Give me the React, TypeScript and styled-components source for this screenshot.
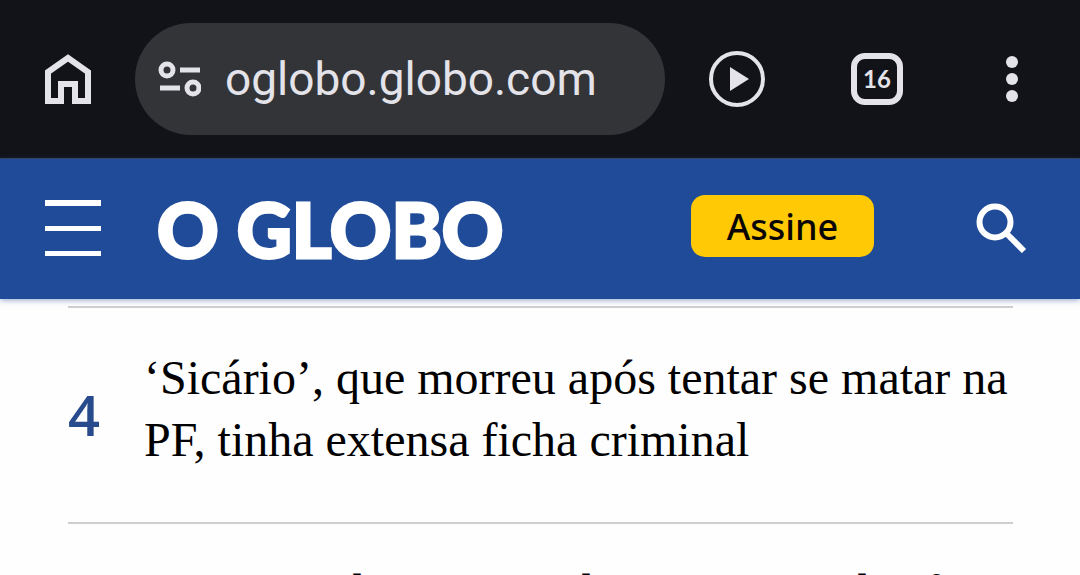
import React from "react";
import styled, { createGlobalStyle } from "styled-components";

const GlobalStyle = createGlobalStyle`
  *, *::before, *::after { box-sizing: border-box; }
  html { background: #fefefe; }
  body { margin: 0; overflow: hidden; }
  #root { height: 100vh; overflow: hidden; }
`;

const Page = styled.div`
  display: flex;
  flex-direction: column;
  min-height: 100vh;
`;

const BrowserBar = styled.div`
  display: flex;
  align-items: center;
  gap: 43px;
  padding: 23px 44px;
  background: #121318;
  border-bottom: 1px solid #3d4357;
  color: #e3e3e9;
`;

const IconButton = styled.button`
  display: flex;
  flex: none;
  padding: 0;
  border: 0;
  background: none;
  color: inherit;
  cursor: pointer;
`;

const AddressPill = styled.div`
  display: flex;
  flex: 1;
  align-items: center;
  gap: 24px;
  min-width: 0;
  height: 112px;
  padding: 0 23px;
  border-radius: 56px;
  background: #333438;
`;

const AddressInput = styled.input`
  flex: 1;
  min-width: 0;
  height: 64px;
  padding: 0;
  border: 0;
  outline: 0;
  background: none;
  color: inherit;
  font: 400 46px/64px Roboto, sans-serif;
`;

const BrowserActions = styled.div`
  display: flex;
  align-items: center;
  gap: 85px;
`;

const TabCount = styled.button`
  display: flex;
  flex: none;
  align-items: center;
  justify-content: center;
  width: 52px;
  height: 52px;
  padding: 0;
  border: 6px solid currentColor;
  border-radius: 14px;
  background: none;
  color: inherit;
  font: 700 24px/24px Lato, sans-serif;
  cursor: pointer;
`;

const SiteHeader = styled.header`
  display: flex;
  align-items: center;
  gap: 56px;
  height: 140px;
  padding: 0 52px 2px 45px;
  background: #1f4b99;
  box-shadow: 0 1px 6px rgba(31, 75, 153, 0.5);
  color: #fff;
`;

const Logo = styled.a`
  flex: 1;
  padding-top: 2px;
  color: inherit;
  font: 900 76px/80px Lato, sans-serif;
  -webkit-text-stroke: 3px currentColor;
  text-decoration: none;
  white-space: nowrap;
`;

const SubscribeButton = styled.button`
  width: 183px;
  height: 62px;
  margin: 0 46px 4px 0;
  padding: 2px 0 0;
  border: 0;
  border-radius: 14px;
  background: #ffc905;
  color: #0a0505;
  font: 500 36px/60px "Noto Sans", sans-serif;
  cursor: pointer;
`;

const Ranking = styled.ol`
  margin: 7px 67px 0 68px;
  padding: 0;
  list-style: none;
`;

const RankingItem = styled.li`
  display: flex;
  align-items: center;
  height: 216px;
  padding-bottom: 2px;
  border-top: 2px solid #cecece;

  &:last-child {
    height: 212px;
  }
`;

const Rank = styled.span`
  flex: none;
  width: 76px;
  color: #274b8d;
  font: 600 56px/64px "Open Sans", sans-serif;
`;

const Headline = styled.a`
  flex: 1;
  padding-bottom: 10px;
  color: #000;
  font: 400 48px/62px "Liberation Serif", serif;
  text-decoration: none;
`;

const stories = [
  { rank: 4, title: "‘Sicário’, que morreu após tentar se matar na PF, tinha extensa ficha criminal" },
  { rank: 5, title: "Para moradores cerca de uma turma dos fãs estava no centro" },
];

export default function App() {
  return (
    <>
      <GlobalStyle />
      <Page>
        <BrowserBar>
          <IconButton aria-label="Página inicial">
            <svg width="48" height="54" viewBox="0 0 48 54" fill="none" stroke="currentColor" strokeWidth="6">
              <path d="M4 20 24 6l20 14v29H31V32H17v17H4Z" />
            </svg>
          </IconButton>
          <AddressPill>
            <IconButton aria-label="Informações do site">
              <svg width="43" height="38" viewBox="0 0 43 38" fill="none" stroke="currentColor" strokeWidth="5">
                <circle cx="9" cy="10" r="6" />
                <path d="M22 10h20M2 28h20" />
                <circle cx="35" cy="28" r="6" />
              </svg>
            </IconButton>
            <AddressInput aria-label="Endereço" defaultValue="oglobo.globo.com" />
          </AddressPill>
          <BrowserActions>
            <IconButton aria-label="Reproduzir">
              <svg width="58" height="58" viewBox="0 0 58 58">
                <circle cx="29" cy="29" r="26" fill="none" stroke="currentColor" strokeWidth="4" />
                <path d="M22 17v24l19-12Z" fill="currentColor" />
              </svg>
            </IconButton>
            <TabCount aria-label="16 guias abertas">16</TabCount>
            <IconButton aria-label="Mais opções">
              <svg width="48" height="48" viewBox="0 0 48 48" fill="currentColor">
                <circle cx="24" cy="7" r="6" />
                <circle cx="24" cy="24" r="6" />
                <circle cx="24" cy="41" r="6" />
              </svg>
            </IconButton>
          </BrowserActions>
        </BrowserBar>
        <SiteHeader>
          <IconButton aria-label="Menu">
            <svg width="56" height="56" viewBox="0 0 56 56" fill="currentColor">
              <path d="M0 0h56v6H0zM0 26h56v5H0zM0 51h56v5H0z" />
            </svg>
          </IconButton>
          <Logo href="#">O GLOBO</Logo>
          <SubscribeButton>Assine</SubscribeButton>
          <IconButton aria-label="Buscar">
            <svg width="52" height="50" viewBox="0 0 52 50" fill="none" stroke="currentColor">
              <circle cx="19" cy="19" r="15.5" strokeWidth="6" />
              <path d="m31 31 17 17" strokeWidth="6" />
            </svg>
          </IconButton>
        </SiteHeader>
        <Ranking>
          {stories.map((story) => (
            <RankingItem key={story.rank}>
              <Rank>{story.rank}</Rank>
              <Headline href="#">{story.title}</Headline>
            </RankingItem>
          ))}
        </Ranking>
      </Page>
    </>
  );
}
